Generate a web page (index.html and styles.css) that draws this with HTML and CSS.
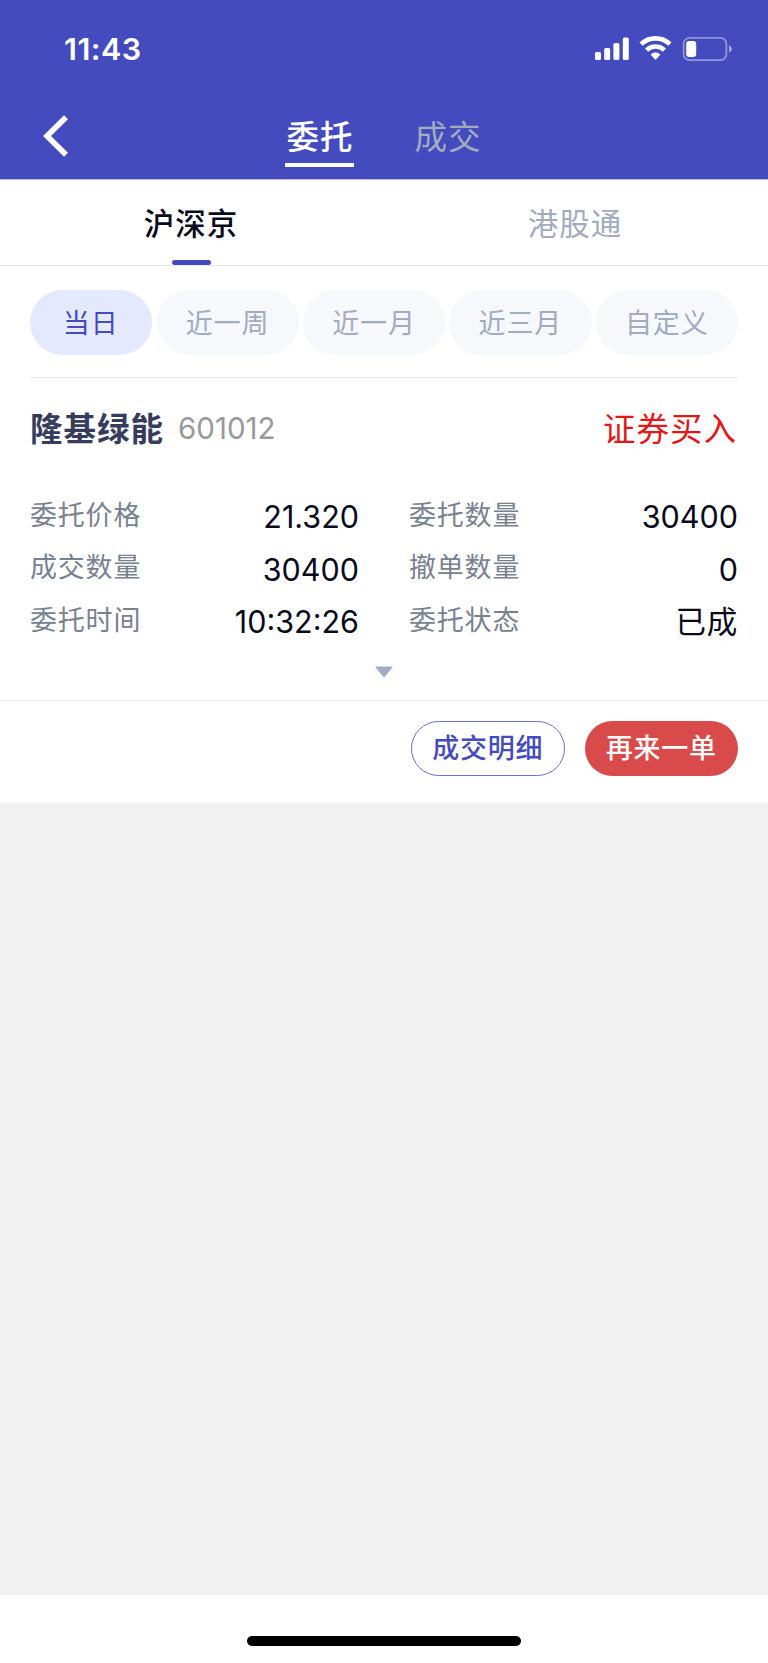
FILE: index.html
```html
<!DOCTYPE html>
<html lang="zh-CN">
<head>
<meta charset="utf-8">
<title>委托</title>
<link rel="stylesheet" href="styles.css">
</head>
<body>
<div class="app">
  <header class="header">
    <div class="status">
      <span class="clock">11:43</span>
      <svg class="status-icons" viewBox="0 0 140 28" width="140" height="28">
        <g fill="#fff">
          <rect x="0" y="17" width="6" height="8" rx="1.6"/>
          <rect x="9.2" y="13" width="6" height="12" rx="1.6"/>
          <rect x="18.4" y="8" width="6" height="17" rx="1.6"/>
          <rect x="27.8" y="2.5" width="6" height="22.5" rx="1.6"/>
          <path d="M56 19.6q2-1.8 4.5-1.8t4.5 1.8L60.5 24.4Z" stroke="#fff" stroke-width=".8" stroke-linejoin="round"/>
        </g>
        <g fill="none" stroke="#fff" stroke-width="4.6">
          <path d="M46.1 9.2a20.8 20.8 0 0 1 28.8 0"/>
          <path d="M51.6 15.2a12.6 12.6 0 0 1 17.8 0"/>
        </g>
        <rect x="88.6" y="2.9" width="42.8" height="22.2" rx="6" fill="none" stroke="#fff" stroke-opacity=".42" stroke-width="1.8"/>
        <rect x="91.2" y="6" width="10" height="16" rx="3" fill="#fff"/>
        <path d="M134 10.2q3 1.2 3 3.8t-3 3.8Z" fill="#fff" fill-opacity=".5"/>
      </svg>
    </div>
    <nav class="nav">
      <svg class="back" viewBox="0 0 26 42" width="26" height="42"><path d="M23 2.2 4 21 23 39.8" fill="none" stroke="#fff" stroke-width="5.6"/></svg>
      <span class="nav-tab nav-tab-on">委托</span>
      <span class="nav-tab">成交</span>
    </nav>
  </header>
  <div class="markets">
    <span class="market market-on">沪深京</span>
    <span class="market">港股通</span>
  </div>
  <div class="ranges">
    <span class="pill pill-on">当日</span>
    <span class="pill">近一周</span>
    <span class="pill">近一月</span>
    <span class="pill">近三月</span>
    <span class="pill">自定义</span>
  </div>
  <section class="order">
    <div class="order-head">
      <span class="name">隆基绿能</span>
      <span class="code">601012</span>
      <span class="side">证券买入</span>
    </div>
    <dl class="facts">
      <div class="fact"><dt>委托价格</dt><dd>21.320</dd></div>
      <div class="fact"><dt>委托数量</dt><dd>30400</dd></div>
      <div class="fact"><dt>成交数量</dt><dd>30400</dd></div>
      <div class="fact"><dt>撤单数量</dt><dd>0</dd></div>
      <div class="fact"><dt>委托时间</dt><dd>10:32:26</dd></div>
      <div class="fact"><dt>委托状态</dt><dd class="cjk">已成</dd></div>
    </dl>
    <svg class="expand" viewBox="0 0 18 12" width="18" height="12"><path d="M1 .5h16q.8.2.3.9L9.6 11q-.6.7-1.2 0L.7 1.4Q.2.7 1 .5Z" fill="#a2abc0"/></svg>
  </section>
  <div class="actions">
    <span class="btn btn-line">成交明细</span>
    <span class="btn btn-fill">再来一单</span>
  </div>
  <main class="blank"></main>
  <footer class="home"><div class="home-bar"></div></footer>
</div>
</body>
</html>
```
FILE: styles.css
```css
* { box-sizing: border-box; }
body {
  margin: 0;
  background: #fff;
  font-family: Inter, "Noto Sans CJK SC", sans-serif;
}
.app {
  display: flex;
  flex-direction: column;
  width: 768px;
  height: 1663px;
}
.header {
  height: 179px;
  background: #434bbe;
  box-shadow: 0 1px 0 #b9bce6;
  color: #fff;
}
.status {
  display: flex;
  justify-content: space-between;
  height: 98px;
  padding: 35px 33px 0 64px;
}
.clock {
  font-size: 30.5px;
  font-weight: 600;
  line-height: 28px;
  letter-spacing: 0.5px;
}
.status-icons { display: block; }
.nav {
  display: flex;
  height: 81px;
  padding-left: 43px;
}
.back { margin: 17px 216px 0 0; }
.nav-tab {
  width: 69px;
  height: 69px;
  margin-right: 59px;
  padding-left: 1px;
  font-size: 32.5px;
  letter-spacing: 1px;
  line-height: 80px;
  text-align: center;
  white-space: nowrap;
  color: #a2abc0;
}
.nav-tab-on {
  border-bottom: 4px solid #fff;
  color: #fff;
  font-weight: 500;
}
.markets {
  display: flex;
  height: 87px;
  border-bottom: 1px solid #e4e8f3;
}
.market {
  display: flex;
  flex: 1;
  flex-direction: column;
  align-items: center;
  padding: 1px 2px 0 0;
  font-size: 30.5px;
  letter-spacing: 1px;
  line-height: 88px;
  color: #a2abc0;
}
.market-on {
  color: #090a1c;
  font-weight: 500;
}
.market-on::after {
  content: "";
  width: 39px;
  height: 6px;
  margin-top: -8px;
  border-radius: 3px;
  background: #434bbe;
}
.ranges {
  display: flex;
  gap: 4.2px;
  height: 112px;
  margin: 0 30px;
  padding-top: 24px;
  border-bottom: 1px solid #e8e9ec;
}
.pill {
  flex: none;
  width: 142.2px;
  height: 65px;
  border-radius: 33px;
  background: #f6f8fc;
  color: #a2abc0;
  font-size: 27px;
  letter-spacing: 0.9px;
  line-height: 68px;
  text-align: center;
}
.pill-on {
  width: 122.4px;
  padding-right: 1px;
  background: #e4e9fe;
  color: #434bbe;
}
.order {
  height: 323px;
  padding: 0 30px;
  border-bottom: 1px solid #e8e9ec;
}
.order-head {
  display: flex;
  align-items: center;
  height: 102px;
}
.name {
  margin-top: -5px;
  font-size: 32.5px;
  letter-spacing: 1px;
  font-weight: 700;
  color: #363d5c;
}
.code {
  margin: -3px 0 0 14px;
  font-size: 29.5px;
  color: #999;
}
.side {
  margin: -5px 1px 0 auto;
  font-size: 32.5px;
  letter-spacing: 1px;
  color: #e31717;
}
.facts {
  display: grid;
  grid-template-columns: 329px 329px;
  column-gap: 50px;
  grid-auto-rows: 52.6px;
  margin: 9px 0 0;
}
.fact {
  display: flex;
  justify-content: space-between;
  line-height: 52px;
}
.fact dt {
  margin-top: 0.6px;
  font-size: 27px;
  letter-spacing: 0.8px;
  color: #788190;
}
.fact dd {
  margin: 2px 0 0;
  font-size: 30.5px;
  color: #090a1c;
}
.fact .cjk {
  font-size: 30.5px;
  letter-spacing: 0.8px;
}
.expand {
  display: block;
  margin: 19px auto 0;
}
.actions {
  display: flex;
  justify-content: flex-end;
  gap: 20px;
  height: 102px;
  padding: 20px 30px 0 0;
}
.btn {
  width: 153.5px;
  height: 55px;
  border-radius: 28px;
  font-size: 27px;
  font-weight: 500;
  letter-spacing: 0.8px;
  line-height: 55px;
  text-align: center;
}
.btn-line {
  border: 1px solid #686fcd;
  color: #434bbe;
  line-height: 53px;
}
.btn-fill {
  background: #d94b4b;
  color: #fff;
}
.blank {
  flex: 1;
  background: #f1f1f1;
}
.home {
  height: 68px;
  padding-top: 41px;
}
.home-bar {
  width: 274px;
  height: 10px;
  margin: 0 auto;
  border-radius: 5px;
  background: #000;
}
```
